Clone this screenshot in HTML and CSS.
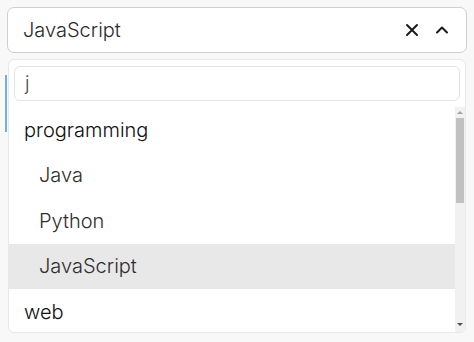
FILE: index.html
```html
<!DOCTYPE html>
<html>
<head>
<meta charset="utf-8">
<link rel="stylesheet" href="styles.css">
</head>
<body>
<div class="wrap">
  <div class="select">
    <span class="value">JavaScript</span>
    <span class="icons">
      <svg class="ico" width="14" height="14" viewBox="0 0 14 14"><path d="M2 2 L12 12 M12 2 L2 12" stroke="#1a1a1a" stroke-width="2" stroke-linecap="round" fill="none"/></svg>
      <svg class="ico" width="14" height="14" viewBox="0 0 14 14"><path d="M2 9.5 L7 4.5 L12 9.5" stroke="#1a1a1a" stroke-width="2" stroke-linecap="round" stroke-linejoin="round" fill="none"/></svg>
    </span>
  </div>
  <div class="dropdown">
    <div class="focusbar"></div>
    <div class="panel">
      <div class="search"><div class="input">j</div></div>
      <div class="list">
        <div class="items">
          <div class="row group">programming</div>
          <div class="row child">Java</div>
          <div class="row child">Python</div>
          <div class="row child active">JavaScript</div>
          <div class="row group">web</div>
        </div>
        <div class="scrollbar">
          <div class="arrow up"></div>
          <div class="thumb"></div>
          <div class="spacer"></div>
          <div class="arrow down"></div>
        </div>
      </div>
    </div>
  </div>
</div>
</body>
</html>
```
FILE: styles.css
```css
html, body {
  margin: 0;
  padding: 0;
  background: #f8f8f8;
  font-family: Inter, "Noto Sans", sans-serif;
}
.wrap {
  padding: 7px;
  width: 460px;
}
.select {
  box-sizing: border-box;
  height: 46px;
  background: #fff;
  border: 1px solid #cfcfcf;
  border-radius: 7px;
  display: flex;
  align-items: center;
  padding: 0 17px 0 15px;
  font-size: 20px;
  font-weight: 300;
  color: #2a2a2a;
}
.value { flex: 1; }
.icons {
  display: flex;
  align-items: center;
  gap: 16px;
}
.ico { display: block; }
.dropdown {
  position: relative;
  margin: 6px 1px 0 1px;
}
.panel {
  box-sizing: border-box;
  height: 274px;
  background: #fff;
  border: 1px solid #e8e8e8;
  border-radius: 6px;
  overflow: hidden;
}
.focusbar {
  position: absolute;
  left: -3px;
  top: 16px;
  width: 2px;
  height: 57px;
  background: #6fb3d9;
}
.search {
  padding: 6px 5px 6px 5px;
}
.input {
  box-sizing: border-box;
  height: 35px;
  border: 1px solid #e3e3e3;
  border-radius: 6px;
  padding: 0 10px;
  display: flex;
  align-items: center;
  font-size: 19px;
  font-weight: 300;
  color: #444;
}
.list {
  display: flex;
  height: 226px;
}
.items {
  flex: 1;
  overflow: hidden;
}
.row {
  height: 45.5px;
  display: flex;
  align-items: center;
  font-size: 20px;
  font-weight: 300;
}
.group {
  padding-left: 15px;
  color: #0e0e0e;
}
.child {
  padding-left: 30px;
  color: #2e2e2e;
}
.active {
  background: #e8e8e8;
}
.scrollbar {
  width: 10px;
  background: #f1f1f1;
  display: flex;
  flex-direction: column;
  align-items: center;
}
.arrow {
  width: 0;
  height: 0;
  border-left: 3px solid transparent;
  border-right: 3px solid transparent;
}
.arrow.up {
  margin-top: 4px;
  border-bottom: 3px solid #a3a3a3;
}
.arrow.down {
  margin-bottom: 7px;
  border-top: 3px solid #505050;
}
.thumb {
  margin-top: 4px;
  width: 8px;
  height: 85px;
  background: #c1c1c1;
}
.spacer { flex: 1; }
```
